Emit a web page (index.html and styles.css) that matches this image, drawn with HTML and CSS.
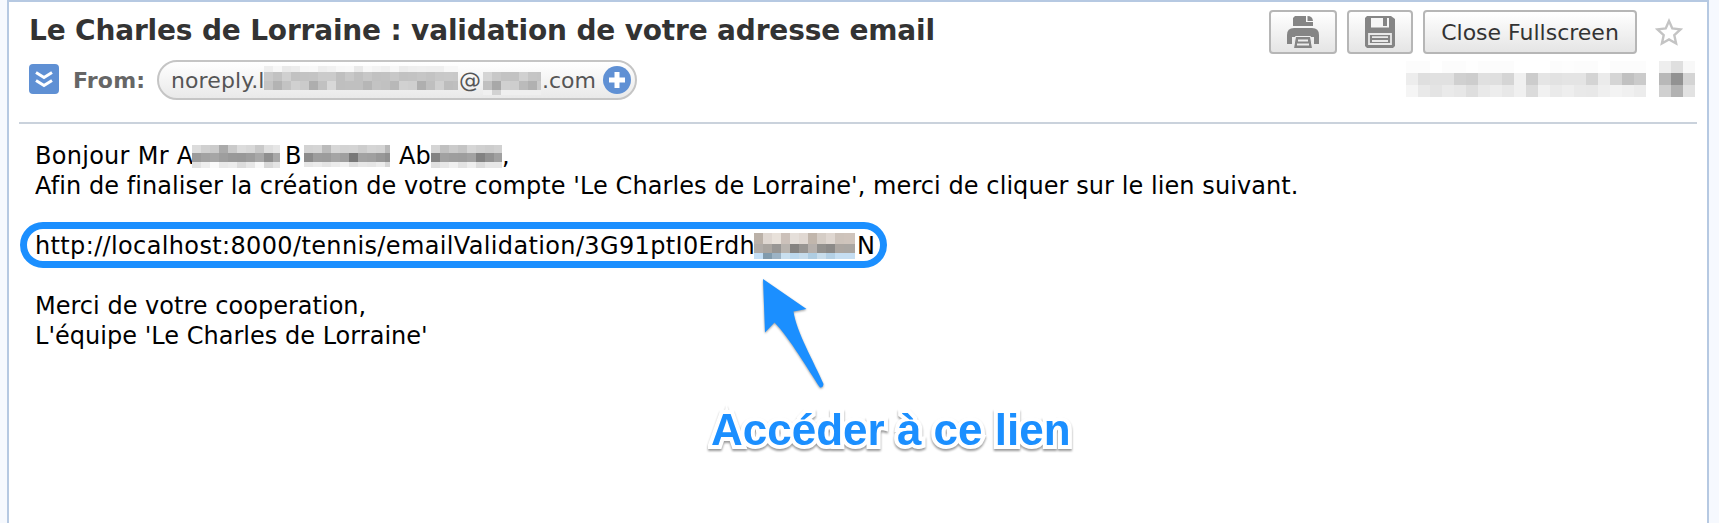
FILE: index.html
```html
<!DOCTYPE html>
<html lang="fr">
<head>
<meta charset="utf-8">
<title>Le Charles de Lorraine : validation de votre adresse email</title>
<link rel="stylesheet" href="styles.css">
</head>
<body>
<main class="panel">
  <header class="head">
    <div class="head-left">
      <h1 class="subject">Le Charles de Lorraine : validation de votre adresse email</h1>
      <div class="from-row">
        <svg class="expand" width="30" height="30" viewBox="0 0 30 30"><rect width="30" height="30" rx="4" fill="#5f90d4"/><path d="M7 8.500l8 5 8-5M7 16.500l8 5 8-5" fill="none" stroke="#fff" stroke-width="3"/></svg>
        <span class="from">From:</span>
        <div class="pill">
          <span class="seg seg-user">noreply.l</span>
          <svg class="mosaic mosaic-user" width="194" height="24" data-cell="9" data-heights="6 9 9" data-rows="eee f7 e9 ec f7 f8 ee f1 f7 f8 e9 f7 f3 f0 f7 ec ef f0 ef ef f7 f7|ca c2 d0 c2 c3 c4 cb cb bf c8 c0 c7 c1 c2 c8 c2 c3 c6 c3 c8 c9 c8|c4 b3 c3 d0 cb ae c1 d8 bf c0 c0 b6 c3 c1 b8 d1 cf af bf d0 bd bf"></svg>
          <span class="seg seg-at">@</span>
          <svg class="mosaic mosaic-host" width="58" height="23" data-cell="9" data-heights="9 9 5" data-rows="d5 c8 c3 c2 d0 c5 c4|c0 a8 d0 ce bb b1 ca|f0 d2 ef ef ef ef ef"></svg>
          <span class="seg seg-com">.com</span>
          <svg width="28" height="28" viewBox="0 0 28 28"><circle cx="14" cy="14" r="14" fill="#5f90d4"/><path d="M14 6v16M6 14h16" stroke="#fff" stroke-width="5"/></svg>
        </div>
      </div>
    </div>
    <div class="head-right">
      <div class="buttons">
        <button class="btn btn-print" aria-label="Print"><svg width="32" height="32" viewBox="0 0 32 32"><path d="M6 10V2l2-2h11v6h7v4z" fill="#858585"/><path d="M20.500 0q5 0 5.500 5h-5.500z" fill="#858585"/><path d="M0 28V19q0-7 7-7h18q7 0 7 7v9h-5v-7H5v7z" fill="#858585"/><path d="M8.500 20.500h15l2 12h-19z" fill="#858585" stroke="#eee" stroke-width="1"/><path d="M11 24.500h10M10 28.500h12" stroke="#eee" stroke-width="1.800"/></svg></button>
        <button class="btn btn-save" aria-label="Save"><svg width="30" height="32" viewBox="0 0 30 32"><path d="M2 0h24l4 3v27l-2 2H2l-2-2V2z" fill="#858585"/><path d="M6 2h18v9.500H6z" fill="#f6f6f6"/><path d="M18 1h4v9h-4z" fill="#858585"/><path d="M4 18h22v10H4z" fill="none" stroke="#e9e9e9" stroke-width="1.800"/><path d="M7 21.200h16M7 25h16" stroke="#e9e9e9" stroke-width="1.800"/></svg></button>
        <button class="btn btn-close"><span>Close Fullscreen</span></button>
        <svg class="star" width="28" height="28" viewBox="0 0 28 28"><path d="M14 3l3.300 7.500 8.200.9-6.200 5.800 1.800 8.300L14 21.500 6.900 25.500l1.800-8.300L2.500 11.400l8.200-.9z" fill="#fff" stroke="#c4c4c4" stroke-width="2.400"/></svg>
      </div>
      <div class="date">
        <svg class="mosaic" width="241" height="36" data-cell="12" data-heights="12 12 12" data-rows="fc fc ff fc fc fe fc fc fc ff ff ff fc fd fc fc ff fc fc fc|ed df e1 e1 d0 cd e0 df d5 f0 cc e5 e2 e4 e4 d4 eb d5 c1 cb|f5 e9 e4 ea e7 de e9 ed e8 f0 db f1 ea ee e9 e8 ef f3 f0 ec"></svg>
        <svg class="mosaic" width="36" height="36" data-cell="12" data-heights="12 12 12" data-rows="ee df f8|b8 92 d4|d0 b2 e2"></svg>
      </div>
    </div>
  </header>
  <section class="message">
    <p class="line greeting">
      <span class="seg seg-mr">Bonjour Mr A</span>
      <svg class="mosaic" width="88" height="23" data-cell="9" data-heights="8 9 6" data-rows="dc d0 cb aa ca dc d8 c9 df e6|9b a2 a6 9e 99 98 9d a8 8f a8|e2 ee fa e9 ec dc e7 f8 d8 e4"></svg>
      <span class="seg seg-b">B</span>
      <svg class="mosaic" width="86" height="23" data-cell="9" data-heights="8 9 5" data-rows="d3 d5 bb d7 d3 d4 cd d5 d3 b9|8b 9d 9c a5 9f 78 a2 a0 98 90|e6 eb e4 eb f0 df e7 e5 ec d7"></svg>
      <span class="seg seg-ab">Ab</span>
      <svg class="mosaic" width="71" height="23" data-cell="9" data-heights="8 9 6" data-rows="d5 c0 cb c4 d6 d0 cd d1|83 a1 9e 9d a2 82 92 a0|e0 e7 f0 e3 ee dc e7 e7"></svg>
      <span class="seg">,</span>
    </p>
    <p class="line line-intro">Afin de finaliser la création de votre compte 'Le Charles de Lorraine', merci de cliquer sur le lien suivant.</p>
    <p class="line link">
      <span class="seg seg-url">http://localhost:8000/tennis/emailValidation/3G91ptI0Erdh</span>
      <svg class="mosaic mosaic-token" width="101" height="26" data-cell="9" data-heights="11 9 6" data-rows="bbb1a8 dfd7d1 e8e1da ccc1ba e5dfda e0d8d2 c1b6ac d5cdc6 dfd7d1 cdc3bb cfc4bc cfc4bc|b1aca8 aaa5a0 989694 b9b4af 858381 989592 b6b0ac 93918e 8c8a88 aca6a1 aaa6a2 aaa6a2|c3def5 819bad 9cb3c5 c9dfef bcd8ed c6dcec afcde2 c8ddec b4d0e5 c6def2 c6def2 c6def2"></svg>
      <span class="seg seg-n">N</span>
    </p>
    <p class="line line-merci">Merci de votre cooperation,</p>
    <p class="line line-team">L'équipe 'Le Charles de Lorraine'</p>
  </section>
  <svg class="arrow" width="70" height="120" viewBox="0 0 70 120"><path d="M3 3L46.500 33L33.500 35.500C36 55 54 86 63.500 108Q63 112 60 111.500C49 95 29 61 14.500 46.500L5 56.500Z" fill="#1b8fff"/></svg>
  <div class="callout">Accéder à ce lien</div>
</main>
<script src="mosaic.js"></script>
</body>
</html>
```
FILE: styles.css
```css
* { box-sizing: border-box; }
body {
  margin: 0;
  height: 523px;
  overflow: hidden;
  padding: 0 10px 0 7px;
  background: #f6f9fe;
  font-family: "DejaVu Sans", Verdana, sans-serif;
  font-variant-ligatures: none;
}
.panel {
  position: relative;
  height: 540px;
  padding: 0 10px;
  border: 2px solid #b6c9e2;
  background: #fff;
}
.head {
  display: flex;
  justify-content: space-between;
  height: 122px;
  border-bottom: 2px solid #cad2dc;
}
.head-left { padding-left: 10px; }
.subject {
  margin: 9px 0 0;
  height: 49px;
  font-size: 28px;
  line-height: 40px;
  letter-spacing: -.17px;
  white-space: nowrap;
  color: #333;
}
.from-row { display: flex; align-items: center; height: 40px; }
.expand { margin-top: -2px; }
.from {
  width: 82px;
  margin-left: 14px;
  font-size: 22px;
  font-weight: bold;
  letter-spacing: .2px;
  color: #666;
}
.pill {
  display: flex;
  align-items: center;
  width: 480px;
  height: 40px;
  margin-left: 2px;
  padding-left: 12px;
  border: 2px solid #c5c5c5;
  border-radius: 20px;
  background: linear-gradient(#fff, #e9e9e9);
  font-size: 22px;
  color: #555;
}
.seg { flex: none; white-space: nowrap; }
.seg-user { width: 93px; overflow: hidden; letter-spacing: .1px; }
.seg-at { width: 25px; padding-left: 1px; }
.seg-com { width: 62px; padding-left: 1px; }
.mosaic { flex: none; display: block; }
.mosaic-user { margin-top: -4px; }
.mosaic-host { margin-top: 7px; }
.buttons { display: flex; gap: 10px; margin: 8px 0 0; width: 428px; }
.btn {
  display: flex;
  align-items: center;
  justify-content: center;
  height: 44px;
  padding: 0;
  border: 2px solid #b6b6b6;
  border-radius: 4px;
  background: linear-gradient(#fff, #e5e5e5);
  font: 22px "DejaVu Sans", Verdana, sans-serif;
  color: #333;
}
.btn-print { width: 68px; }
.btn-save { width: 66px; }
.btn-close { width: 214px; white-space: nowrap; }
.star { margin: 8px 0 0 8px; }
.date { display: flex; gap: 12px; margin: 7px 0 0 137px; }
.message { padding: 17px 0 0 16px; font-size: 24px; color: #000; }
.line { margin: 0; height: 30px; line-height: 30px; letter-spacing: .02px; white-space: nowrap; }
.line-intro { letter-spacing: .075px; }
.greeting { display: flex; align-items: center; }
.seg-mr { width: 157px; letter-spacing: .28px; }
.seg-b { width: 24px; padding-left: 5px; }
.seg-ab { width: 41px; padding-left: 9px; }
.link {
  display: flex;
  align-items: center;
  width: 867px;
  height: 46px;
  margin: 21px 0 23px -15px;
  padding-left: 8px;
  border: 7px solid #1b8fff;
  border-radius: 23px;
}
.seg-url { width: 719px; padding-top: 1px; letter-spacing: .36px; }
.seg-n { padding: 1px 0 0 2px; }
.mosaic-token { margin-top: 2px; }
.arrow {
  position: absolute;
  left: 751px;
  top: 274px;
  filter: drop-shadow(0 1px 1px rgba(0, 0, 0, .4));
}
.callout {
  position: absolute;
  left: 702px;
  top: 403px;
  font: bold 44px/50px "Liberation Sans", Arial, sans-serif;
  white-space: nowrap;
  color: #1b8fff;
  -webkit-text-stroke: 8px #fff;
  paint-order: stroke fill;
  filter: drop-shadow(0 2px 1px rgba(0, 0, 0, .4));
}
```
FILE: mosaic.js
```js
// Fills each .mosaic with rows of solid cells; a two-digit value is a grey level.
document.querySelectorAll('.mosaic').forEach(function (svg) {
  var heights = svg.dataset.heights.split(' ').map(Number);
  var cell = Number(svg.dataset.cell);
  var top = 0;
  svg.dataset.rows.split('|').forEach(function (row, y) {
    row.split(' ').forEach(function (value, x) {
      var rect = document.createElementNS('http://www.w3.org/2000/svg', 'rect');
      rect.setAttribute('x', x * cell);
      rect.setAttribute('y', top);
      rect.setAttribute('width', cell);
      rect.setAttribute('height', heights[y]);
      rect.setAttribute('fill', '#' + (value.length === 2 ? value + value + value : value));
      rect.setAttribute('shape-rendering', 'crispEdges');
      svg.appendChild(rect);
    });
    top += heights[y];
  });
});
```
